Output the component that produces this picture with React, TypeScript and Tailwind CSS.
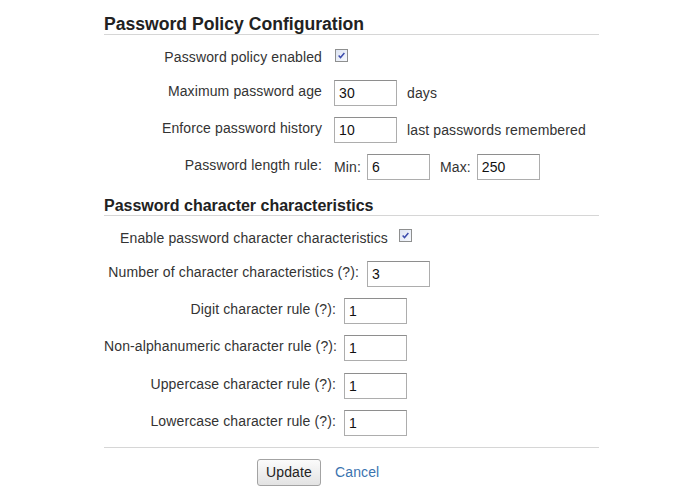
import type { ReactNode } from "react";

function TextField({ value }: { value: string }) {
  return (
    <input
      type="text"
      defaultValue={value}
      className="h-[26px] w-[63px] border border-[#adadad] border-t-[#8e8e8e] bg-white px-[4px] text-[14px] leading-[16px] text-[#111] outline-none"
    />
  );
}

function CheckMark() {
  return (
    <span className="flex h-[13px] w-[13px] items-center justify-center border border-[#8e8f8f] bg-gradient-to-br from-[#dce3f2] to-[#f7f9fd]">
      <svg viewBox="0 0 11 11" className="h-[9px] w-[9px]">
        <path d="M2 5.5 L4.3 8 L9 2.5" fill="none" stroke="#3b4bad" strokeWidth="1.8" />
      </svg>
    </span>
  );
}

function Row({
  label,
  labelWidth,
  gap,
  top,
  children,
}: {
  label: string;
  labelWidth: string;
  gap: string;
  top: string;
  children: ReactNode;
}) {
  return (
    <div className={`${top} flex items-start`}>
      <span className={`${labelWidth} shrink-0 whitespace-nowrap pt-[2px] text-right leading-[18px]`}>
        {label}
      </span>
      <div className={`${gap} flex items-baseline whitespace-nowrap`}>{children}</div>
    </div>
  );
}

export default function App() {
  return (
    <div className="min-h-[494px] w-[695px] bg-white pl-[104px] font-['Liberation_Sans',Arial,sans-serif] text-[14px] tracking-[0.12px] text-[#333]">
      <div className="w-[495px]">
        <h2 className="border-b border-[#d6d6d6] pt-[14px] text-[17.6px] leading-[20px] font-bold tracking-normal text-[#222]">
          Password Policy Configuration
        </h2>

        <div className="mt-[13px] flex items-start">
          <span className="w-[218px] shrink-0 whitespace-nowrap text-right leading-[18px]">
            Password policy enabled
          </span>
          <div className="ml-[13px] pt-[1px]">
            <CheckMark />
          </div>
        </div>

        <Row label="Maximum password age" labelWidth="w-[218px]" gap="ml-[12px]" top="mt-[14px]">
          <TextField value="30" />
          <span className="ml-[10px]">days</span>
        </Row>

        <Row label="Enforce password history" labelWidth="w-[218px]" gap="ml-[12px]" top="mt-[11px]">
          <TextField value="10" />
          <span className="ml-[10px]">last passwords remembered</span>
        </Row>

        <Row label="Password length rule:" labelWidth="w-[218px]" gap="ml-[12px]" top="mt-[11px]">
          <span>Min:</span>
          <span className="ml-[6px]">
            <TextField value="6" />
          </span>
          <span className="ml-[10px]">Max:</span>
          <span className="ml-[6px]">
            <TextField value="250" />
          </span>
        </Row>

        <h3 className="mt-[17px] border-b border-[#d6d6d6] text-[16px] leading-[18px] font-bold tracking-normal text-[#222]">
          Password character characteristics
        </h3>

        <div className="mt-[13px] flex items-start">
          <span className="w-[284px] shrink-0 whitespace-nowrap text-right leading-[18px]">
            Enable password character characteristics
          </span>
          <div className="ml-[11px]">
            <CheckMark />
          </div>
        </div>

        <Row
          label="Number of character characteristics (?):"
          labelWidth="w-[255px]"
          gap="ml-[8px]"
          top="mt-[14px]"
        >
          <TextField value="3" />
        </Row>
        <Row label="Digit character rule (?):" labelWidth="w-[232px]" gap="ml-[8px]" top="mt-[11px]">
          <TextField value="1" />
        </Row>
        <Row
          label="Non-alphanumeric character rule (?):"
          labelWidth="w-[232px]"
          gap="ml-[8px]"
          top="mt-[11px]"
        >
          <TextField value="1" />
        </Row>
        <Row label="Uppercase character rule (?):" labelWidth="w-[232px]" gap="ml-[8px]" top="mt-[12px]">
          <TextField value="1" />
        </Row>
        <Row label="Lowercase character rule (?):" labelWidth="w-[232px]" gap="ml-[8px]" top="mt-[11px]">
          <TextField value="1" />
        </Row>

        <div className="mt-[11px] border-t border-[#d6d6d6]" />

        <div className="mt-[11px] flex items-center pl-[153px]">
          <button
            type="button"
            className="h-[27px] w-[64px] rounded-[3px] border border-[#a3a3a3] bg-gradient-to-b from-[#fbfbfb] to-[#e3e3e3] text-[14px] text-[#222]"
          >
            Update
          </button>
          <a href="#" className="ml-[14px] text-[#3b73af]">
            Cancel
          </a>
        </div>
      </div>
    </div>
  );
}
